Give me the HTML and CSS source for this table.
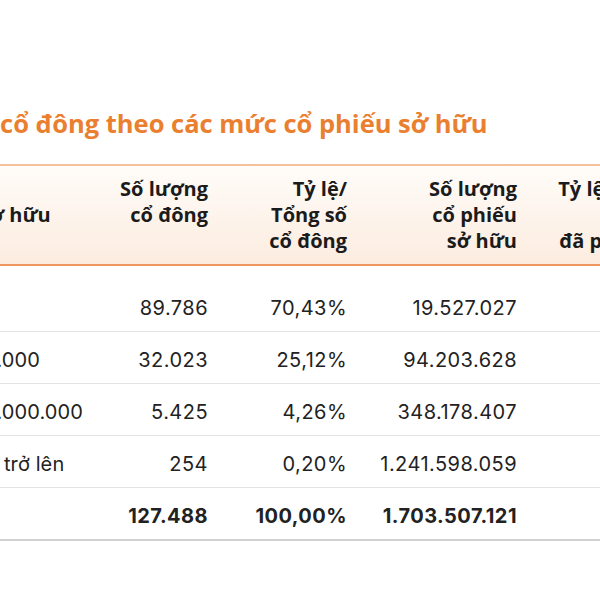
FILE: index.html
```html
<!DOCTYPE html>
<html lang="vi">
<head>
<meta charset="utf-8">
<link rel="stylesheet" href="styles.css">
</head>
<body>
<div class="page">
  <div class="content">
    <h2 class="title">Cơ cấu cổ đông theo các mức cổ phiếu sở hữu</h2>
    <div class="tbl">
      <div class="row head">
        <div class="c c1"><span>Mức sở hữu</span></div>
        <div class="c">Số lượng<br>cổ đông</div>
        <div class="c">Tỷ lệ/<br>Tổng số<br>cổ đông</div>
        <div class="c">Số lượng<br>cổ phiếu<br>sở hữu</div>
        <div class="c c5">Tỷ lệ/ Tổng số<br>CP<br>đã phát hành</div>
      </div>
      <div class="row first">
        <div class="c c1">1 - 1.000</div>
        <div class="c">89.786</div>
        <div class="c">70,43%</div>
        <div class="c">19.527.027</div>
        <div class="c c5"></div>
      </div>
      <div class="row">
        <div class="c c1">1.001 - 10.000</div>
        <div class="c">32.023</div>
        <div class="c">25,12%</div>
        <div class="c">94.203.628</div>
        <div class="c c5"></div>
      </div>
      <div class="row">
        <div class="c c1">10.001 - 1.000.000</div>
        <div class="c">5.425</div>
        <div class="c">4,26%</div>
        <div class="c">348.178.407</div>
        <div class="c c5"></div>
      </div>
      <div class="row">
        <div class="c c1">1.000.001 trở lên</div>
        <div class="c">254</div>
        <div class="c">0,20%</div>
        <div class="c">1.241.598.059</div>
        <div class="c c5"></div>
      </div>
      <div class="row total">
        <div class="c c1">Tổng</div>
        <div class="c">127.488</div>
        <div class="c">100,00%</div>
        <div class="c">1.703.507.121</div>
        <div class="c c5"></div>
      </div>
    </div>
  </div>
</div>
</body>
</html>
```

FILE: styles.css
```css
html, body {
  margin: 0;
  padding: 0;
  background: #ffffff;
}
.page {
  width: 600px;
  height: 600px;
  overflow: hidden;
}
.content {
  margin-left: -92px;
  width: 820px;
  padding-top: 108px;
}
.title {
  margin: 0 0 26px 0;
  font-family: "Open Sans", "Lato", sans-serif;
  font-weight: 700;
  font-size: 25.5px;
  line-height: 30px;
  color: #ea802f;
}
.tbl {
  font-family: "Inter", "Liberation Sans", sans-serif;
  font-size: 20px;
  letter-spacing: 0.45px;
  color: #222222;
}
.row {
  display: grid;
  grid-template-columns: 200px 100px 139px 170px 218px;
  border-bottom: 1px solid #e3e3e3;
}
.c {
  text-align: right;
  line-height: 20px;
  padding: 18px 0 13px 0;
}
.c1 {
  text-align: left;
  letter-spacing: 0.1px;
}
.c5 {
  text-align: center;
}
.head {
  border-top: 2px solid #f3c19c;
  border-bottom: 2px solid #ee9760;
  background: linear-gradient(180deg, #fffcf9 0%, #fcecdf 100%);
  font-family: "Open Sans", "Lato", sans-serif;
  font-weight: 700;
  font-size: 20px;
  letter-spacing: 0;
  color: #1b1b1b;
}
.head .c {
  line-height: 26px;
  padding: 10px 0 10px 0;
}
.head .c1 {
  display: flex;
  align-items: center;
  padding-left: 23px;
  letter-spacing: 0;
}
.first .c {
  padding-top: 32px;
}
.total {
  font-weight: 700;
  border-bottom: 2px solid #d2d2d2;
}
```
